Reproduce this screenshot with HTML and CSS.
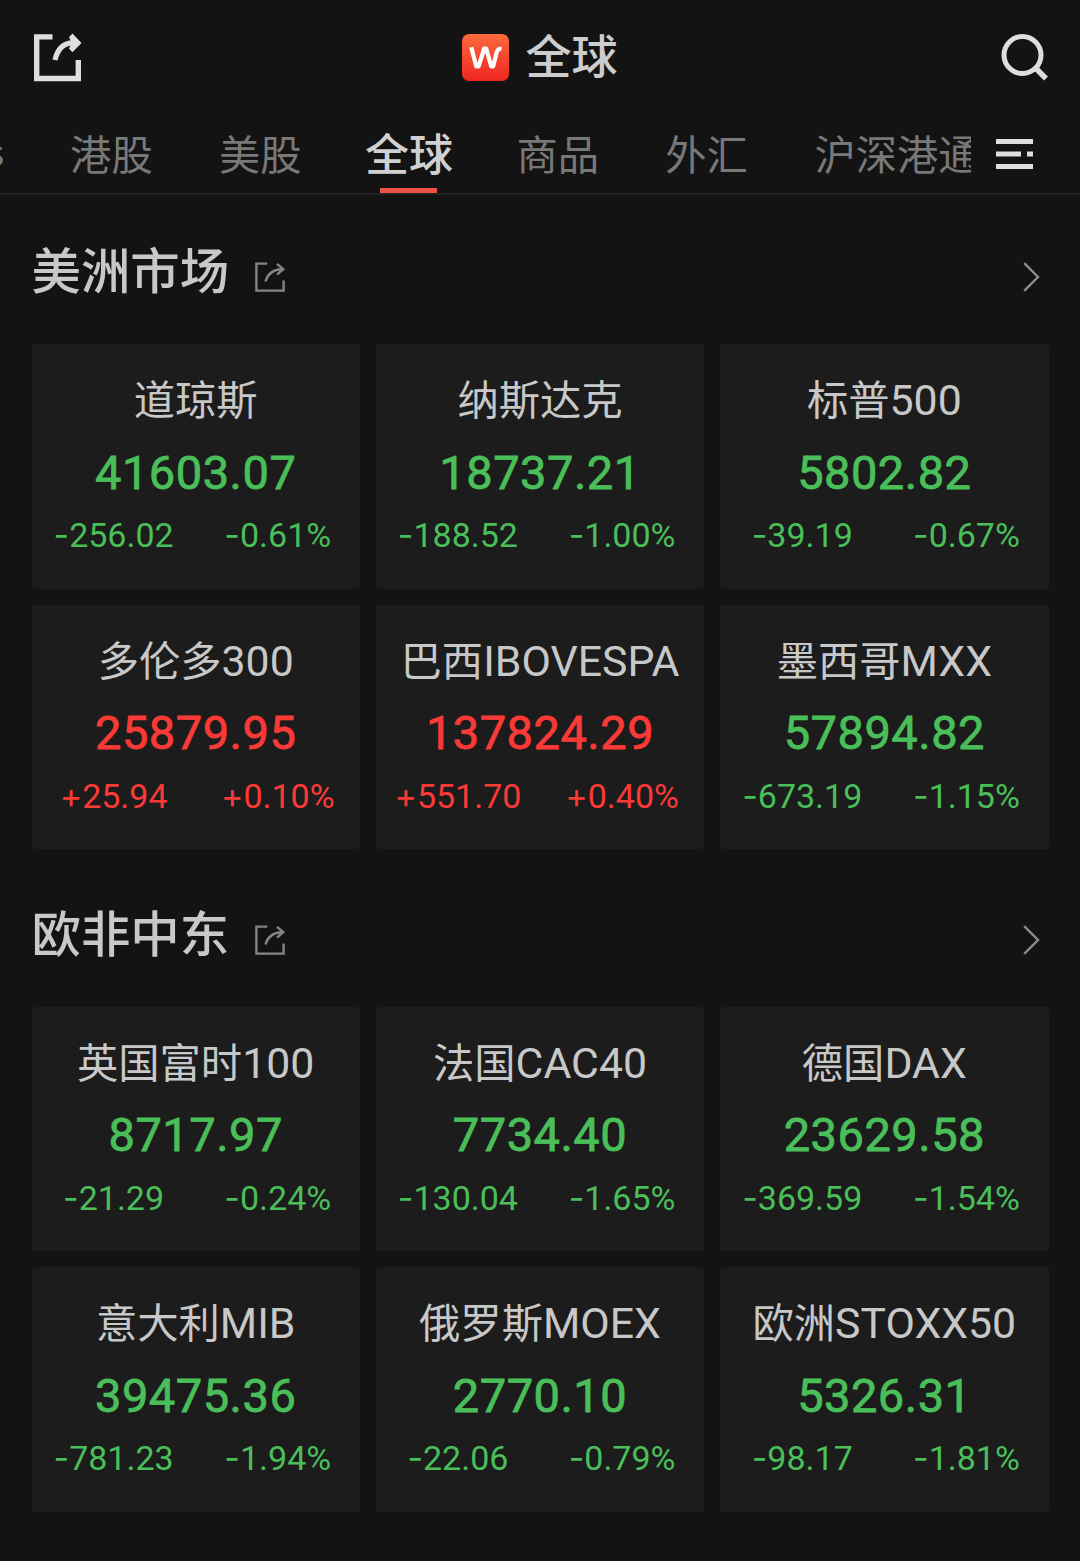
FILE: index.html
```html
<!DOCTYPE html>
<html lang="zh-CN">
<head>
<meta charset="utf-8">
<title>全球</title>
<link rel="stylesheet" href="styles.css">
</head>
<body>
<svg class="defs" width="0" height="0" aria-hidden="true">
  <symbol id="share-small" viewBox="0 0 30 30"><path d="M12.3 1.6H1.4v27H28.6V18.6M10.5 19.5C12.5 12 17 7.4 27 7.2M22 1.8 28.3 7.2 22 12.6" fill="none" stroke="currentColor" stroke-width="2.4"/></symbol>
  <symbol id="chevron" viewBox="0 0 17 30"><path d="M1.2 1.2 15 15 1.2 28.8" fill="none" stroke="currentColor" stroke-width="2.4"/></symbol>
</svg>
<header class="topbar">
  <svg class="share" viewBox="0 0 48 48"><path d="M18.5 2.9H2.7v41.6h41.6V26" fill="none" stroke="currentColor" stroke-width="5.4"/><path d="M21 26C23.5 15 29 9 39 8.9" fill="none" stroke="currentColor" stroke-width="5.2"/><path d="M38.5-.5 47.5 8.9 38.5 18.3 35 14.8 37.5 8.9 35 3Z" fill="currentColor"/></svg>
  <div class="brand">
    <svg class="logo" viewBox="0 0 47 47"><defs><linearGradient id="g" x1="0" y1="0" x2="0" y2="1"><stop offset="0" stop-color="#fb6b3d"/><stop offset="1" stop-color="#ee2620"/></linearGradient></defs><rect width="47" height="47" rx="7" fill="url(#g)"/><path d="M9.3 13.2 14.2 32.3H16.6L22.2 14.5H24.2L29.2 32.3H31.2L34.6 18.5Q35.8 14.4 39.5 14.8" fill="none" stroke="#fff" stroke-width="4.2" stroke-linejoin="round"/></svg>
    <h1>全球</h1>
  </div>
  <svg class="search" viewBox="0 0 48 48"><circle cx="21.5" cy="21" r="18.5" fill="none" stroke="currentColor" stroke-width="5"/><path d="M34.5 34 45 44.5" stroke="currentColor" stroke-width="5.4"/></svg>
</header>
<nav class="tabs">
  <div class="strip">
    <span class="tab first">ETFs</span>
    <span class="tab">港股</span>
    <span class="tab">美股</span>
    <span class="tab active">全球</span>
    <span class="tab">商品</span>
    <span class="tab">外汇</span>
    <span class="tab last">沪深港通</span>
  </div>
  <svg class="menu" viewBox="0 0 37 30"><path d="M0 2.5H37M0 15H25M31 15H37M0 27.5H37" stroke="currentColor" stroke-width="5"/></svg>
</nav>
<main>
  <section>
    <div class="head"><h2>美洲市场</h2><svg class="share-sm"><use href="#share-small"/></svg><svg class="chev"><use href="#chevron"/></svg></div>
    <div class="grid">
      <article class="card down"><h3>道琼斯</h3><p class="price">41603.07</p><p class="delta"><span><i>-</i>256.02</span><span><i>-</i>0.61%</span></p></article>
      <article class="card down"><h3>纳斯达克</h3><p class="price">18737.21</p><p class="delta"><span><i>-</i>188.52</span><span><i>-</i>1.00%</span></p></article>
      <article class="card down"><h3>标普<b>500</b></h3><p class="price">5802.82</p><p class="delta"><span><i>-</i>39.19</span><span><i>-</i>0.67%</span></p></article>
      <article class="card up"><h3>多伦多<b>300</b></h3><p class="price">25879.95</p><p class="delta"><span><i>+</i>25.94</span><span><i>+</i>0.10%</span></p></article>
      <article class="card up"><h3>巴西<b>IBOVESPA</b></h3><p class="price">137824.29</p><p class="delta"><span><i>+</i>551.70</span><span><i>+</i>0.40%</span></p></article>
      <article class="card down"><h3>墨西哥<b>MXX</b></h3><p class="price">57894.82</p><p class="delta"><span><i>-</i>673.19</span><span><i>-</i>1.15%</span></p></article>
    </div>
  </section>
  <section>
    <div class="head"><h2>欧非中东</h2><svg class="share-sm"><use href="#share-small"/></svg><svg class="chev"><use href="#chevron"/></svg></div>
    <div class="grid">
      <article class="card down"><h3>英国富时<b>100</b></h3><p class="price">8717.97</p><p class="delta"><span><i>-</i>21.29</span><span><i>-</i>0.24%</span></p></article>
      <article class="card down"><h3>法国<b>CAC40</b></h3><p class="price">7734.40</p><p class="delta"><span><i>-</i>130.04</span><span><i>-</i>1.65%</span></p></article>
      <article class="card down"><h3>德国<b>DAX</b></h3><p class="price">23629.58</p><p class="delta"><span><i>-</i>369.59</span><span><i>-</i>1.54%</span></p></article>
      <article class="card down"><h3>意大利<b>MIB</b></h3><p class="price">39475.36</p><p class="delta"><span><i>-</i>781.23</span><span><i>-</i>1.94%</span></p></article>
      <article class="card down"><h3>俄罗斯<b>MOEX</b></h3><p class="price">2770.10</p><p class="delta"><span><i>-</i>22.06</span><span><i>-</i>0.79%</span></p></article>
      <article class="card down"><h3>欧洲<b>STOXX50</b></h3><p class="price">5326.31</p><p class="delta"><span><i>-</i>98.17</span><span><i>-</i>1.81%</span></p></article>
    </div>
  </section>
</main>
</body>
</html>
```
FILE: styles.css
```css
* { box-sizing: border-box; margin: 0; padding: 0; }
body {
  background: #131313;
  color: #c8c8c8;
  font-family: "Noto Sans CJK SC", sans-serif;
  height: 1561px;
  overflow: hidden;
}
.defs { display: none; }
.topbar {
  display: flex;
  justify-content: space-between;
  height: 115px;
  padding: 34px 31px 0 34px;
  color: #dedede;
}
.share, .search { width: 48px; height: 48px; overflow: visible; }
.brand { display: flex; gap: 17px; height: 47px; align-items: center; color: #cdcdcd; margin-right: 4px; }
.logo { width: 47px; height: 47px; }
h1 { font-size: 46px; font-weight: 500; line-height: 47px; padding-bottom: 9px; }
.tabs {
  display: flex;
  align-items: flex-start;
  height: 80px;
  border-bottom: 2px solid #232323;
}
.strip {
  display: flex;
  gap: 66px;
  width: 971px;
  height: 78px;
  overflow: hidden;
  padding-left: 4px;
}
.tab {
  display: flex;
  flex: none;
  justify-content: center;
  width: 82.8px;
  height: 78px;
  line-height: 75px;
  font-size: 41.3px;
  white-space: nowrap;
  color: #787878;
}
.tab.first { width: 0; justify-content: flex-end; font-size: 36px; line-height: 70px; }
.tab.last { width: 166px; }
.tab.active {
  color: #d0d0d0;
  font-size: 44px;
  line-height: 75px;
  font-weight: 500;
  background: linear-gradient(#ee5347, #ee5347) center bottom / 57px 5px no-repeat;
}
.menu { width: 37px; height: 30px; margin: 24px 0 0 25px; color: #dedede; }
main { padding: 0 31.5px; }
.head { display: flex; height: 149px; padding-top: 37px; }
h2 { font-size: 49.4px; font-weight: 500; line-height: 72px; }
.share-sm { width: 30px; height: 30px; margin: 30px 0 0 26px; color: #858585; }
.chev { width: 17px; height: 30px; margin: 30px 9px 0 auto; color: #8c8c8c; }
section { height: 662.8px; }
.grid {
  display: grid;
  grid-template-columns: repeat(3, 1fr);
  grid-auto-rows: 244.7px;
  gap: 16px;
}
.card { background: #1c1c1c; border-radius: 4px; padding-top: 23px; text-align: center; white-space: nowrap; }
h3 { font-size: 41.3px; font-weight: 400; line-height: 60px; height: 60px; }
h3 b { font-family: Roboto, sans-serif; font-weight: 400; font-size: 42.8px; }
.price { font: 400 47px/60px Roboto, sans-serif; margin-top: 15.5px; -webkit-text-stroke: 0.8px currentColor; letter-spacing: 0.5px; }
.delta { display: grid; grid-template-columns: 1fr 1fr; font: 400 34px/40px Roboto, sans-serif; margin-top: 12.5px; }
.delta i { font-family: Inter, sans-serif; font-style: normal; }
.down p { color: #4abf59; }
.up p { color: #f93a37; }
```
